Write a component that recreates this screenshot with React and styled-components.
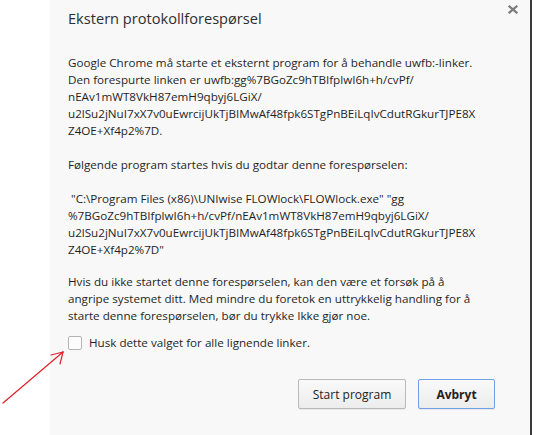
import React from "react";
import styled, { createGlobalStyle } from "styled-components";

const GlobalStyle = createGlobalStyle`
  html, body {
    margin: 0;
    padding: 0;
    background: #ffffff;
  }
  body {
    font-family: "Open Sans", "Noto Sans", sans-serif;
  }
`;

const Page = styled.div`
  position: relative;
  display: flex;
  width: 536px;
  height: 435px;
  overflow: hidden;
  background: #ffffff;
`;

const Gutter = styled.div`
  width: 50px;
  flex-shrink: 0;
`;

const Dialog = styled.div`
  position: relative;
  display: flex;
  flex-direction: column;
  width: 482px;
  flex-shrink: 0;
  background: #f8f8f8;
  border-right: 2px solid #3a3a3a;
  padding: 7px 0 0 18px;
  box-sizing: border-box;
  color: #1f1f1f;
`;

const Title = styled.h1`
  margin: 0;
  font-size: 14.6px;
  font-weight: 400;
  line-height: 22px;
  color: #2e2e2e;
`;

const Close = styled.svg`
  position: absolute;
  top: 5px;
  right: 12px;
`;

const Body = styled.div`
  display: flex;
  flex-direction: column;
  gap: 17px;
  margin-top: 25px;
`;

const Para = styled.p`
  margin: ${({ $tight }) => ($tight ? "-2px 0 0" : "0")};
  font-size: 11.65px;
  line-height: 17px;
  white-space: nowrap;
`;

const CheckRow = styled.label`
  display: flex;
  align-items: center;
  gap: 7px;
  margin-top: 10px;
  font-size: 11.65px;
  line-height: 17px;
`;

const Box = styled.span`
  width: 14px;
  height: 14px;
  box-sizing: border-box;
  border: 1px solid #b4b4b4;
  border-radius: 2px;
  background: #fcfcfc;
`;

const Actions = styled.div`
  display: flex;
  justify-content: flex-end;
  gap: 12px;
  margin-top: 28px;
  padding-right: 35px;
`;

const Button = styled.button`
  height: 30px;
  padding: 0;
  width: ${({ $w }) => $w}px;
  font-family: inherit;
  font-size: 12px;
  font-weight: ${({ $primary }) => ($primary ? 700 : 400)};
  color: #222222;
  background: linear-gradient(#fafafa, #ececec);
  border: 1px solid ${({ $primary }) => ($primary ? "#6f9fe6" : "#b9b9b9")};
  border-radius: 2px;
  box-shadow: 0 1px 0 rgba(0, 0, 0, 0.06);
`;

const Arrow = styled.svg`
  position: absolute;
  left: 0;
  top: 345px;
`;

const App = () => (
  <>
    <GlobalStyle />
    <Page>
      <Gutter />
      <Dialog>
        <Title>Ekstern protokollforespørsel</Title>
        <Close width="10" height="9" viewBox="0 0 10 9">
          <g stroke="#7c7c7c" strokeWidth="2.2" strokeLinecap="square">
            <line x1="1.5" y1="1.5" x2="8.5" y2="7.5" />
            <line x1="8.5" y1="1.5" x2="1.5" y2="7.5" />
          </g>
        </Close>
        <Body>
          <Para>
            Google Chrome må starte et eksternt program for å behandle uwfb:-linker.
            <br />
            Den forespurte linken er uwfb:gg%7BGoZc9hTBIfplwI6h+h/cvPf/
            <br />
            nEAv1mWT8VkH87emH9qbyj6LGiX/
            <br />
            u2lSu2jNuI7xX7v0uEwrcijUkTjBIMwAf48fpk6STgPnBEiLqIvCdutRGkurTJPE8X
            <br />
            Z4OE+Xf4p2%7D.
          </Para>
          <Para>Følgende program startes hvis du godtar denne forespørselen:</Para>
          <Para>
            &nbsp;"C:\Program Files (x86)\UNIwise FLOWlock\FLOWlock.exe" "gg
            <br />
            %7BGoZc9hTBIfplwI6h+h/cvPf/nEAv1mWT8VkH87emH9qbyj6LGiX/
            <br />
            u2lSu2jNuI7xX7v0uEwrcijUkTjBIMwAf48fpk6STgPnBEiLqIvCdutRGkurTJPE8X
            <br />
            Z4OE+Xf4p2%7D"
          </Para>
          <Para $tight>
            Hvis du ikke startet denne forespørselen, kan den være et forsøk på å
            <br />
            angripe systemet ditt. Med mindre du foretok en uttrykkelig handling for å
            <br />
            starte denne forespørselen, bør du trykke Ikke gjør noe.
          </Para>
        </Body>
        <CheckRow>
          <Box />
          Husk dette valget for alle lignende linker.
        </CheckRow>
        <Actions>
          <Button $w={108}>Start program</Button>
          <Button $w={77} $primary>
            Avbryt
          </Button>
        </Actions>
      </Dialog>
      <Arrow width="70" height="65" viewBox="0 0 70 65">
        <g stroke="#e0202a" strokeWidth="1.2" fill="none" strokeLinecap="round">
          <line x1="3" y1="58" x2="63" y2="7" />
          <line x1="63" y1="7" x2="51" y2="10" />
          <line x1="63" y1="7" x2="60" y2="19" />
        </g>
      </Arrow>
    </Page>
  </>
);

export default App;
